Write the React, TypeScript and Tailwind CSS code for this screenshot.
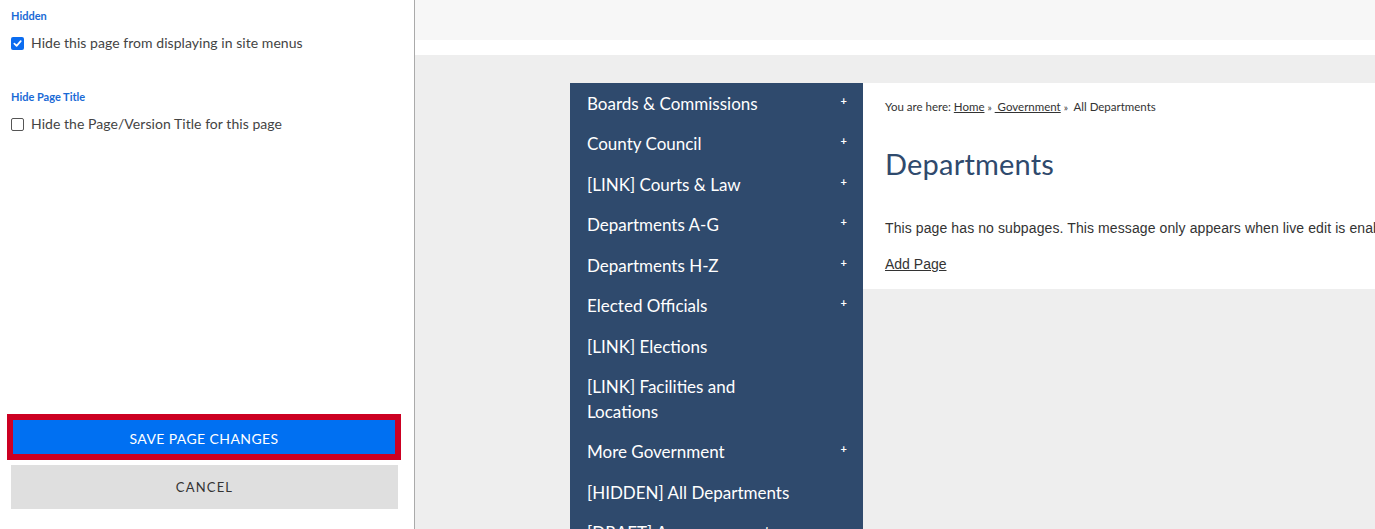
import React from "react";

const navItems: { label: string; plus: boolean }[] = [
  { label: "Boards & Commissions", plus: true },
  { label: "County Council", plus: true },
  { label: "[LINK] Courts & Law", plus: true },
  { label: "Departments A-G", plus: true },
  { label: "Departments H-Z", plus: true },
  { label: "Elected Officials", plus: true },
  { label: "[LINK] Elections", plus: false },
  { label: "[LINK] Facilities and Locations", plus: false },
  { label: "More Government", plus: true },
  { label: "[HIDDEN] All Departments", plus: false },
  { label: "[DRAFT] Announcements", plus: false },
];

function Checkbox({ checked }: { checked: boolean }) {
  return checked ? (
    <span className="flex h-[13px] w-[13px] shrink-0 items-center justify-center rounded-[2px] bg-[#0b6cf0]">
      <svg width="9" height="9" viewBox="0 0 10 10">
        <path d="M1.5 5.2 L4 7.6 L8.6 2.3" fill="none" stroke="white" strokeWidth="1.9" strokeLinecap="round" strokeLinejoin="round" />
      </svg>
    </span>
  ) : (
    <span className="h-[13px] w-[13px] shrink-0 rounded-[2px] border border-[#555] bg-white" />
  );
}

export default function App() {
  return (
    <div className="flex h-[529px] w-[1375px] overflow-hidden bg-white" style={{ fontFamily: "Lato, sans-serif" }}>
      {/* Left panel */}
      <div className="flex h-full w-[415px] shrink-0 flex-col justify-between border-r border-[#aaaaaa] bg-white">
        <div className="px-[11px] pt-[9px]">
          <div className="text-[11px] font-bold leading-[14px] text-[#1a6ad6]">Hidden</div>
          <div className="mt-[11px] flex items-center gap-[7px]">
            <Checkbox checked />
            <span className="text-[14px] leading-[18px] tracking-[0.05px] text-[#444]">Hide this page from displaying in site menus</span>
          </div>
          <div className="mt-[38px] text-[11px] font-bold leading-[14px] text-[#1a6ad6]">Hide Page Title</div>
          <div className="mt-[11px] flex items-center gap-[7px]">
            <Checkbox checked={false} />
            <span className="text-[14px] leading-[18px] tracking-[0.05px] text-[#444]">Hide the Page/Version Title for this page</span>
          </div>
        </div>
        <div className="flex flex-col gap-[5px] pb-[20px] pl-[7px] pr-[12px]">
          <button className="h-[46px] w-[394px] border-[6px] border-[#cc0022] bg-[#0070f2] pt-[2px] text-[14px] tracking-[0.4px] text-white">
            SAVE PAGE CHANGES
          </button>
          <button className="ml-[4px] h-[44px] w-[387px] bg-[#dfdfdf] pt-[2px] text-[13px] tracking-[1.2px] text-[#333]">
            CANCEL
          </button>
        </div>
      </div>

      {/* Right area */}
      <div className="flex min-w-0 flex-1 flex-col">
        <div className="h-[40px] shrink-0 bg-[#f7f7f7]" />
        <div className="h-[15px] shrink-0 bg-white" />
        <div className="flex flex-1 items-start bg-[#eeeeee] pl-[155px] pt-[28px]">
          <nav className="w-[293px] shrink-0 bg-[#2f4a6d]">
            {navItems.map((item) => (
              <div key={item.label} className="flex items-start justify-between pb-[7.5px] pl-[17px] pr-[16px] pt-[8.5px]">
                <span className="max-w-[212px] text-[17px] leading-[24.5px] text-white">{item.label}</span>
                {item.plus && <span className="mt-[3px] text-[11px] font-bold leading-[12px] text-white">+</span>}
              </div>
            ))}
          </nav>
          <div className="h-[206px] min-w-0 flex-1 bg-white pl-[22px] pt-[17px]">
            <div className="whitespace-nowrap text-[11.5px] leading-[14px] text-[#333]">
              You are here: <span className="underline">Home</span> <span className="text-[10px]">»</span>{" "}
              <span className="underline">&nbsp;Government</span> <span className="text-[10px]">»</span>&nbsp; All Departments
            </div>
            <h1 className="mt-[34px] text-[29px] leading-[32px] tracking-[0.2px] text-[#2f4a6d]">Departments</h1>
            <p className="mt-[39px] whitespace-nowrap text-[14px] leading-[18px] tracking-[0.1px] text-[#333]" style={{ fontFamily: "'Liberation Sans', Arial, sans-serif" }}>
              This page has no subpages. This message only appears when live edit is enabled.
            </p>
            <p className="mt-[18px] text-[14px] leading-[18px] text-[#333] underline" style={{ fontFamily: "'Liberation Sans', Arial, sans-serif" }}>
              Add Page
            </p>
          </div>
        </div>
      </div>
    </div>
  );
}
